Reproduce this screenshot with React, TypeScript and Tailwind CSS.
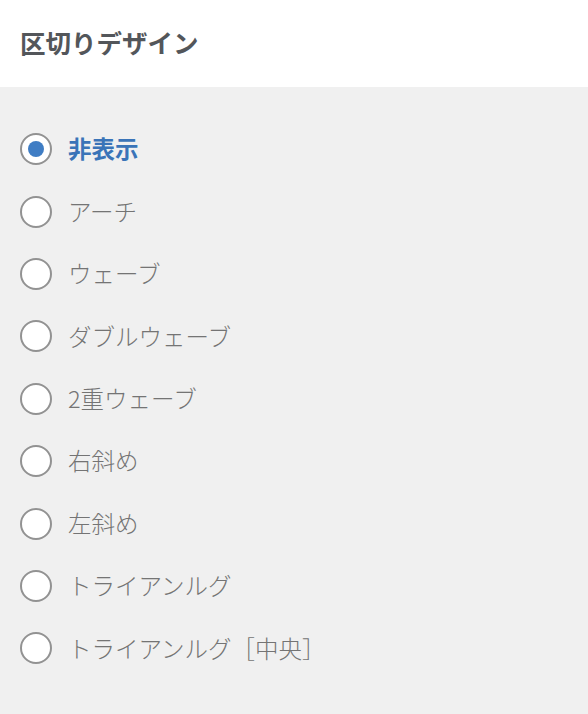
import React, { useState } from 'react';

const options = [
  '非表示',
  'アーチ',
  'ウェーブ',
  'ダブルウェーブ',
  '2重ウェーブ',
  '右斜め',
  '左斜め',
  'トライアンルグ',
  'トライアンルグ［中央］',
];

const App = () => {
  const [selected, setSelected] = useState(0);

  return (
    <div
      className="w-[588px] h-[714px] bg-[#f0f0f0] flex flex-col"
      style={{ fontFamily: '"Noto Sans CJK JP", "Noto Sans", sans-serif' }}
    >
      <div className="h-[87px] shrink-0 bg-white flex items-center px-[20px] pb-[4px]">
        <h1 className="text-[25.5px] font-bold text-[#53565a] leading-none">区切りデザイン</h1>
      </div>

      <div className="pt-[31px] flex flex-col">
        {options.map((label, i) => {
          const active = i === selected;
          return (
            <label
              key={label}
              className="h-[62.4px] flex items-center gap-[16px] px-[20px] cursor-pointer"
              onClick={() => setSelected(i)}
            >
              <span className="w-[32px] h-[32px] rounded-full border-2 border-[#929292] bg-white flex items-center justify-center shrink-0">
                {active && <span className="w-[16px] h-[16px] rounded-full bg-[#3f7dc4]" />}
              </span>
              <span
                className={
                  active
                    ? 'text-[23.5px] font-bold text-[#3a74b8] leading-none'
                    : 'text-[23.5px] font-light text-[#747474] leading-none'
                }
              >
                {label}
              </span>
            </label>
          );
        })}
      </div>
    </div>
  );
};

export default App;
